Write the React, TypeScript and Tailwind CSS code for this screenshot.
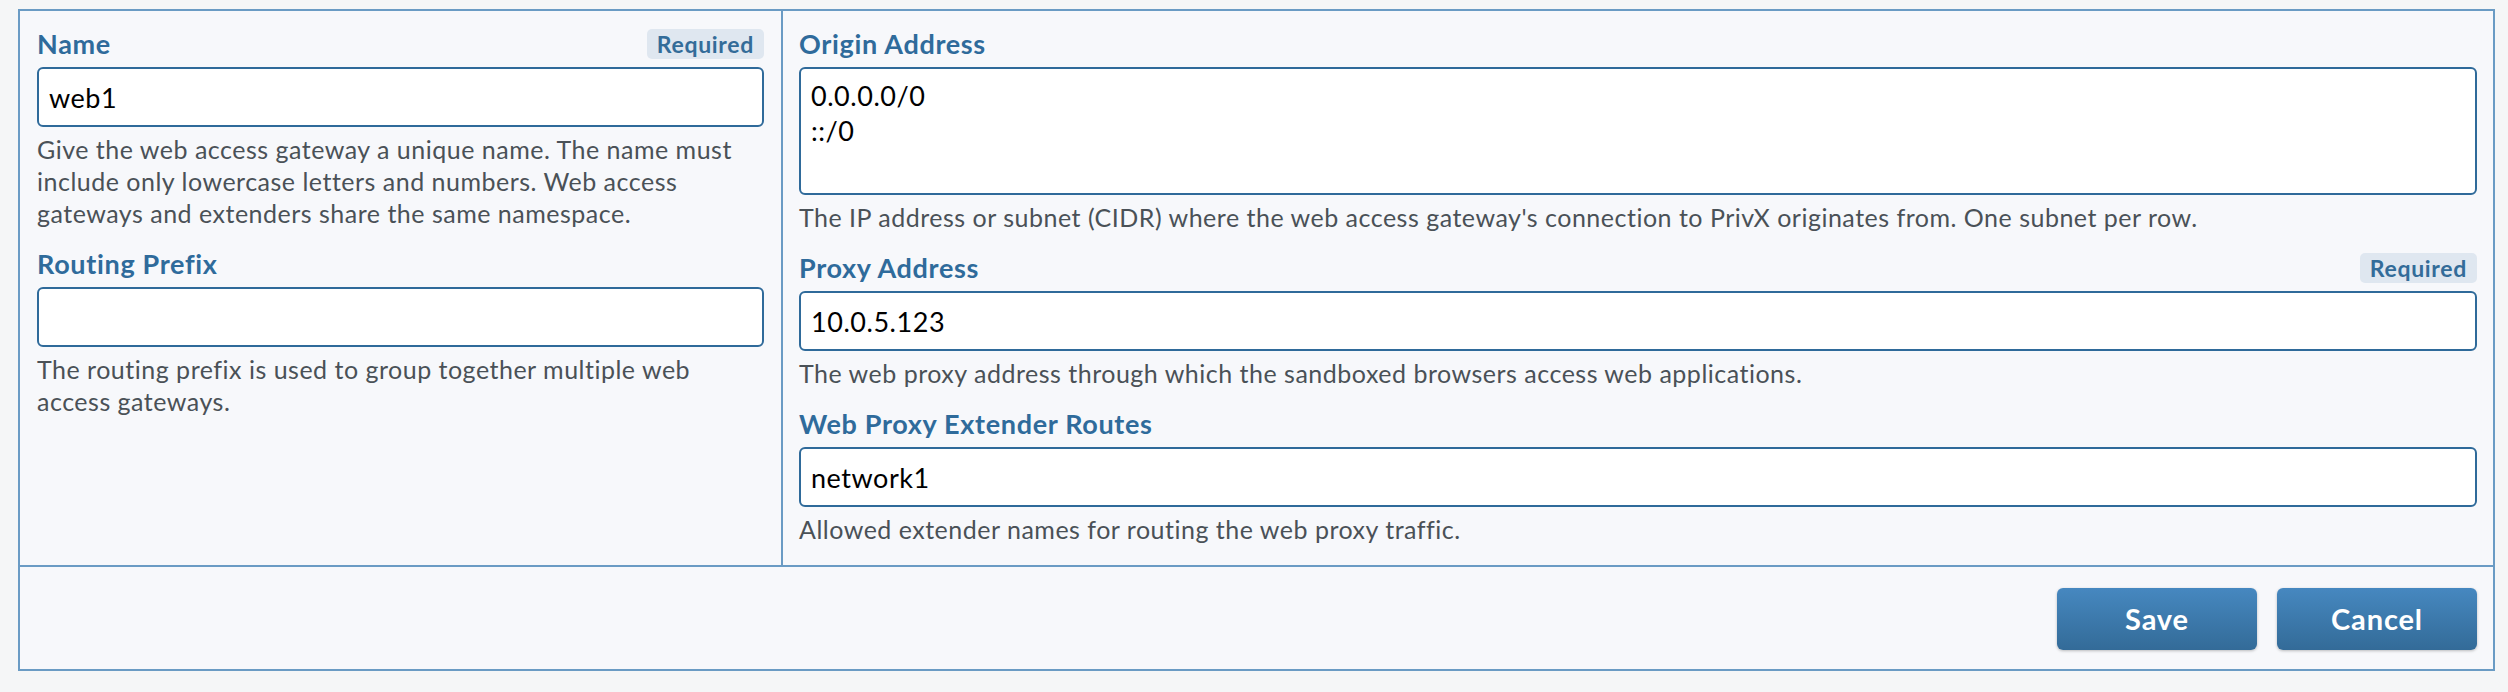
import { ReactNode } from 'react';

type FieldProps = {
  label: string;
  required?: boolean;
  hint: string;
  children: ReactNode;
  className?: string;
};

function Field({ label, required, hint, children, className }: FieldProps) {
  return (
    <div className={className}>
      <div className="flex h-[30px] items-center justify-between mb-[8px]">
        <label className="text-[27px] font-bold tracking-[0.025em] text-[#2f6b9b] leading-[30px]">{label}</label>
        {required && (
          <span className="h-[30px] px-[10px] rounded-[5px] bg-[#dfe7f0] text-[#336c99] text-[23px] font-bold tracking-[0.03em] leading-[30px]">
            Required
          </span>
        )}
      </div>
      {children}
      <p className="mt-[6px] text-[25px] tracking-[0.02em] leading-[32px] text-[#4a5157]">{hint}</p>
    </div>
  );
}

function TextInput({ value }: { value: string }) {
  return (
    <input
      type="text"
      defaultValue={value}
      className="block w-full h-[60px] rounded-[6px] border-2 border-[#2f6a9a] bg-white px-[10px] text-[27px] tracking-[0.02em] text-black outline-none"
    />
  );
}

export default function App() {
  return (
    <div
      className="min-h-screen bg-[#f5f6f7] pt-[9px] pl-[18px] pr-[13px]"
      style={{ fontFamily: 'Lato, "Open Sans", sans-serif' }}
    >
      <form className="border-2 border-[#6a9bc4] bg-[#f7f8fb]">
        <div className="flex">
          {/* left column */}
          <div className="w-[763px] shrink-0 border-r-2 border-[#6a9bc4] pt-[18px] px-[17px]">
            <Field label="Name" required hint="Give the web access gateway a unique name. The name must include only lowercase letters and numbers. Web access gateways and extenders share the same namespace.">
              <TextInput value="web1" />
            </Field>
            <Field
              className="mt-[20px]"
              label="Routing Prefix"
              hint="The routing prefix is used to group together multiple web access gateways."
            >
              <TextInput value="" />
            </Field>
          </div>

          {/* right column */}
          <div className="flex-1 pt-[18px] pb-[20px] px-[16px]">
            <Field label="Origin Address" hint="The IP address or subnet (CIDR) where the web access gateway's connection to PrivX originates from. One subnet per row.">
              <textarea
                defaultValue={'0.0.0.0/0\n::/0'}
                className="block w-full h-[128px] resize-none rounded-[6px] border-2 border-[#2f6a9a] bg-white px-[10px] pt-[9px] text-[27px] tracking-[0.02em] leading-[35px] text-black outline-none"
              />
            </Field>
            <Field
              className="mt-[20px]"
              label="Proxy Address"
              required
              hint="The web proxy address through which the sandboxed browsers access web applications."
            >
              <TextInput value="10.0.5.123" />
            </Field>
            <Field
              className="mt-[20px]"
              label="Web Proxy Extender Routes"
              hint="Allowed extender names for routing the web proxy traffic."
            >
              <TextInput value="network1" />
            </Field>
          </div>
        </div>

        <div className="flex justify-end gap-[20px] border-t-2 border-[#6a9bc4] px-[16px] pt-[21px] pb-[19px]">
          {['Save', 'Cancel'].map(t => (
            <button
              key={t}
              type="button"
              className="w-[200px] h-[62px] rounded-[6px] bg-gradient-to-b from-[#4688c0] to-[#336b98] text-white text-[29px] font-bold tracking-[0.03em] shadow-[0_1px_3px_rgba(0,0,0,0.25)]"
            >
              {t}
            </button>
          ))}
        </div>
      </form>
    </div>
  );
}
